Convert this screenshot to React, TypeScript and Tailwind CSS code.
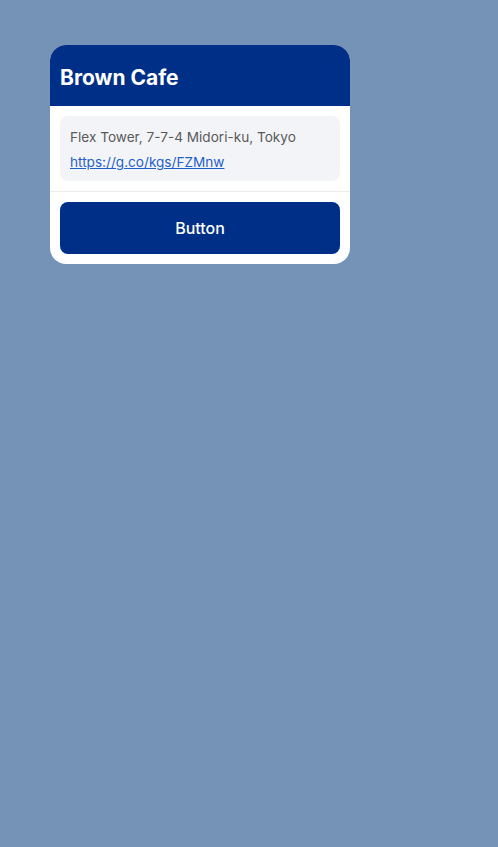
import React from "react";

export default function App() {
  return (
    <div className="min-h-[847px] w-full bg-[#7593b6] pt-[45px] pl-[50px]" style={{ fontFamily: "Inter, 'Noto Sans', sans-serif" }}>
      <div className="w-[300px] rounded-[16px] bg-white overflow-hidden">
        <div className="h-[61px] bg-[#002f87] flex items-center px-[10px] pt-[4px]">
          <h1 className="text-[21px] font-bold text-white">Brown Cafe</h1>
        </div>
        <div className="p-[10px]">
          <div className="rounded-[8px] bg-[#f3f4f7] pt-[11px] pb-[9px] px-[10px] flex flex-col gap-[5px]">
            <p className="text-[13.6px] leading-[20px] text-[#5a5a5a]">Flex Tower, 7-7-4 Midori-ku, Tokyo</p>
            <a href="#" className="text-[13.6px] leading-[20px] text-[#1f5fc8] underline w-fit">https://g.co/kgs/FZMnw</a>
          </div>
        </div>
        <div className="border-t border-[#ececec] p-[10px]">
          <button className="w-full h-[52px] rounded-[8px] bg-[#002f87] text-white text-[16px] font-medium">Button</button>
        </div>
      </div>
    </div>
  );
}
